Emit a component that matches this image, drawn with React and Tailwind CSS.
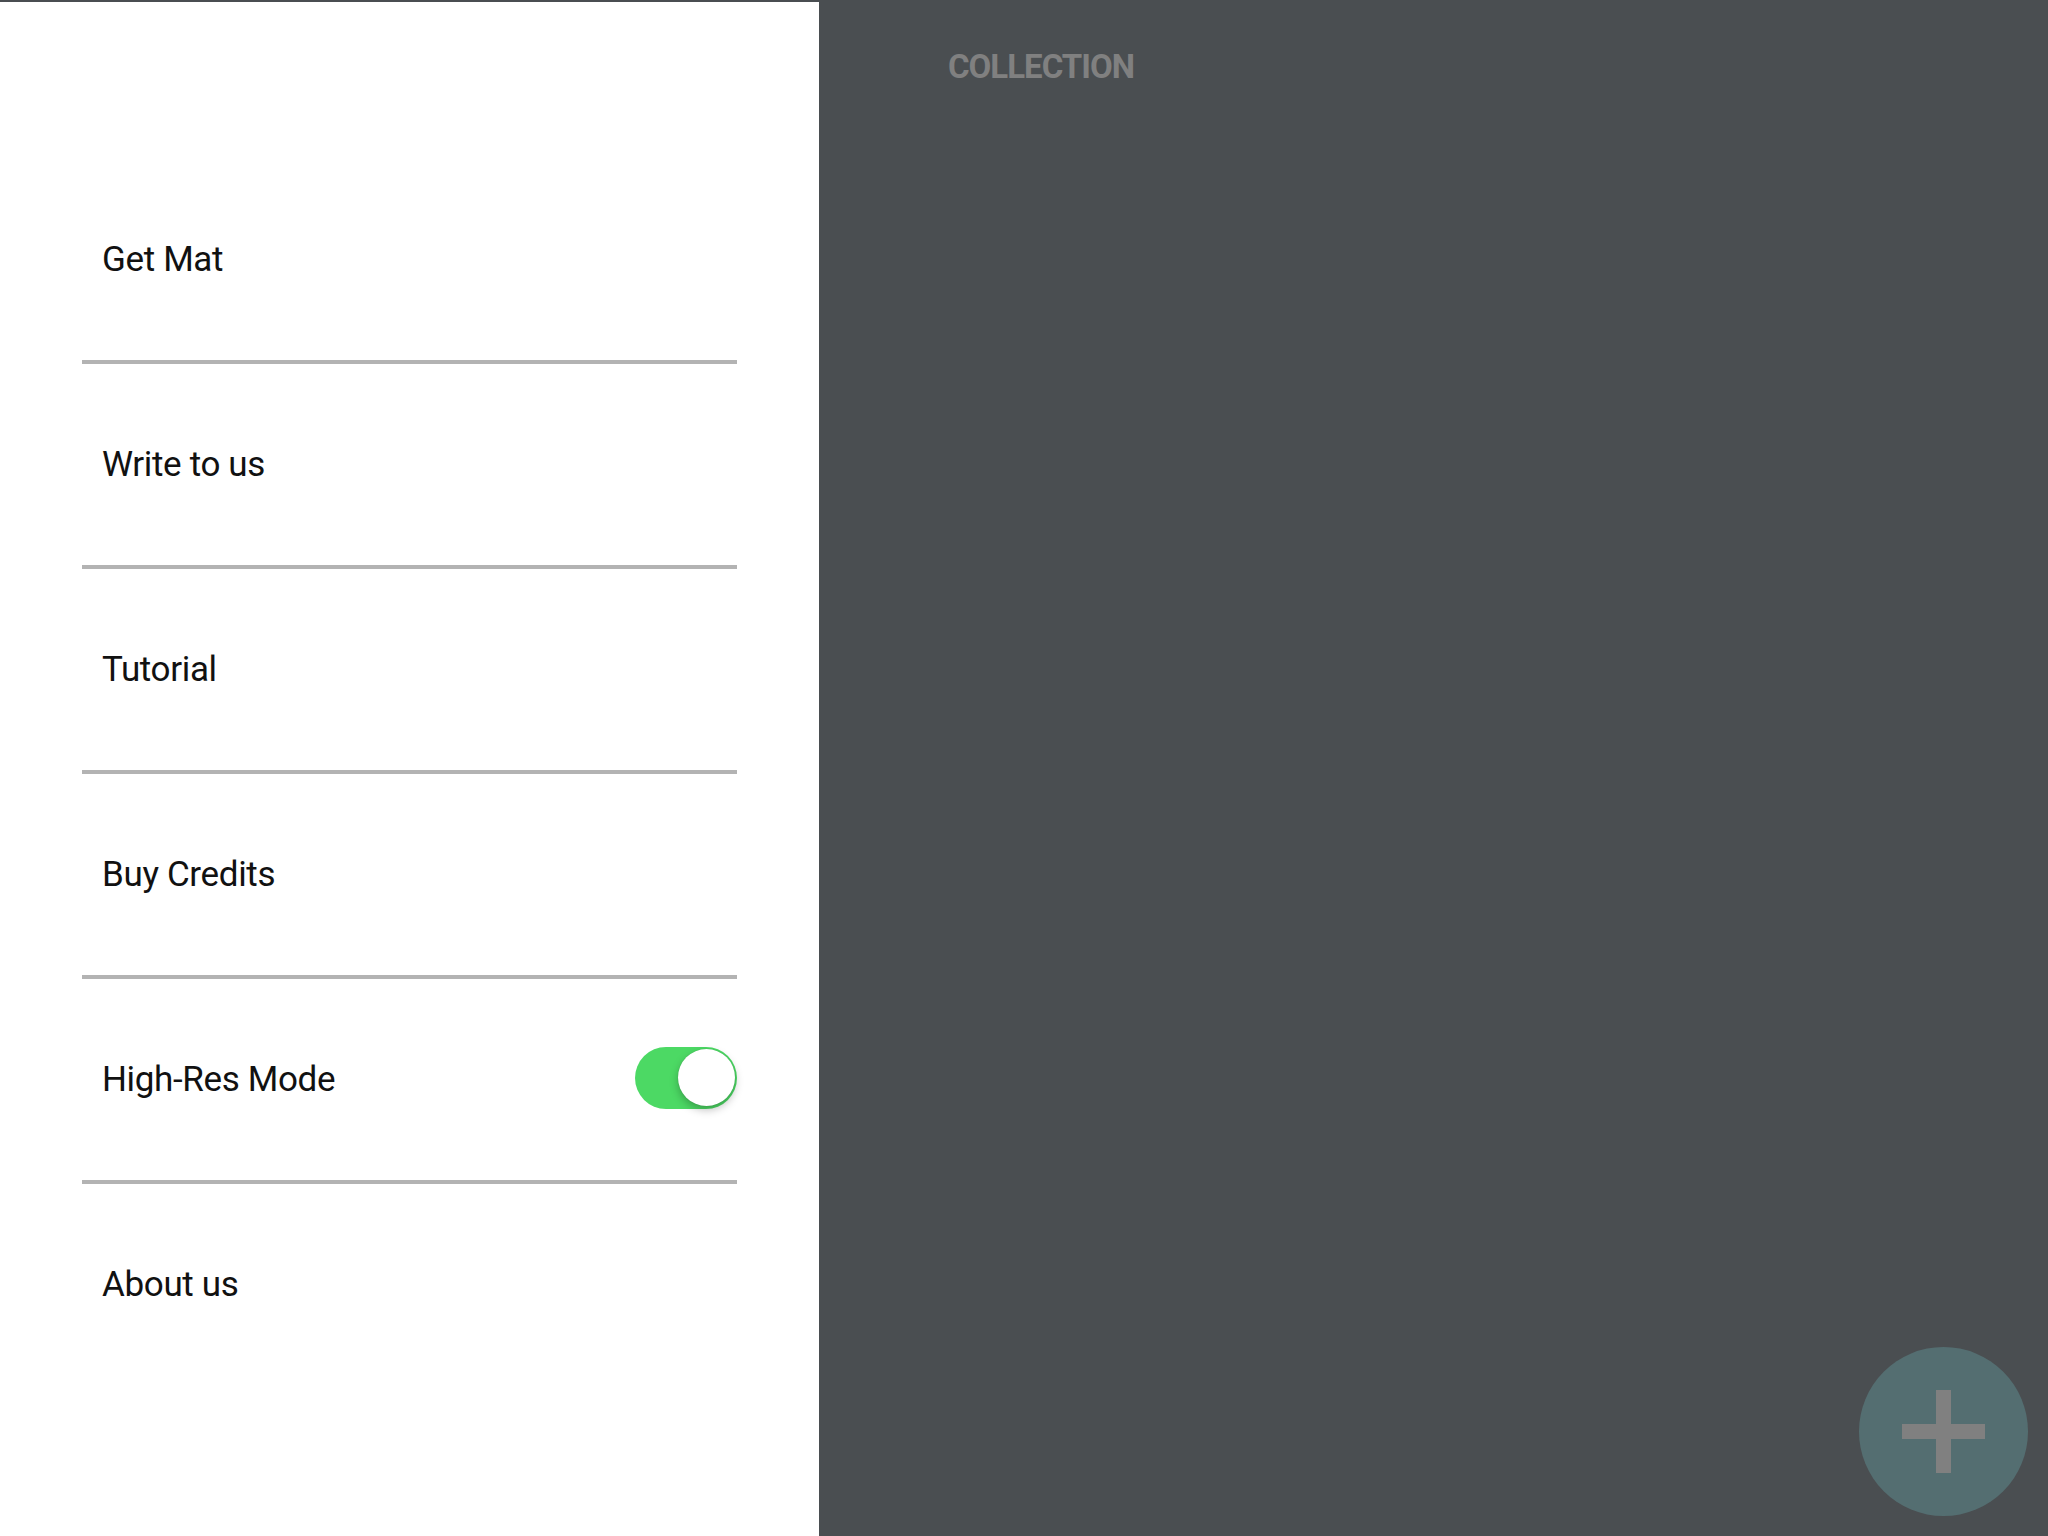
const items = ["Get Mat", "Write to us", "Tutorial", "Buy Credits", "High-Res Mode", "About us"];

export default function App() {
  return (
    <div className="flex h-[1536px] w-[2048px] overflow-hidden bg-[#4a4e51] font-['Roboto',_'Open_Sans',_sans-serif]">
      <aside className="mt-[2px] w-[819px] shrink-0 bg-white px-[82px] pt-[157px]">
        {items.map((label, i) => (
          <MenuRow key={label} label={label} last={i === items.length - 1} toggle={label === "High-Res Mode"} />
        ))}
      </aside>

      <main className="relative flex-1">
        <h1 className="pl-[129px] pt-[50px] text-[33px] font-bold leading-none tracking-[-0.03em] text-[#808080]">COLLECTION</h1>

        <button className="absolute bottom-[20px] right-[20px] flex h-[169px] w-[169px] items-center justify-center rounded-full bg-[#546e71]">
          <svg width="83" height="83" viewBox="0 0 83 83">
            <rect x="0" y="34" width="83" height="15" fill="#808080" />
            <rect x="34" y="0" width="15" height="83" fill="#808080" />
          </svg>
        </button>
      </main>
    </div>
  );
}

function MenuRow({ label, last, toggle }) {
  return (
    <div className={last ? "" : "border-b-4 border-[#b3b3b3]"}>
      <div className="flex h-[201px] items-center justify-between pl-[20px]">
        <span className="text-[35px] font-normal leading-none tracking-[-0.01em] text-[#111111]">{label}</span>
        {toggle && <Toggle />}
      </div>
    </div>
  );
}

function Toggle() {
  return (
    <div className="mb-[4px] flex h-[62px] w-[102px] items-center justify-end rounded-full bg-[#4cd964] pr-[2px]">
      <div className="h-[57px] w-[57px] rounded-full bg-white shadow-[0_4px_8px_rgba(0,0,0,0.25),0_0_1px_rgba(0,0,0,0.2)]" />
    </div>
  );
}
